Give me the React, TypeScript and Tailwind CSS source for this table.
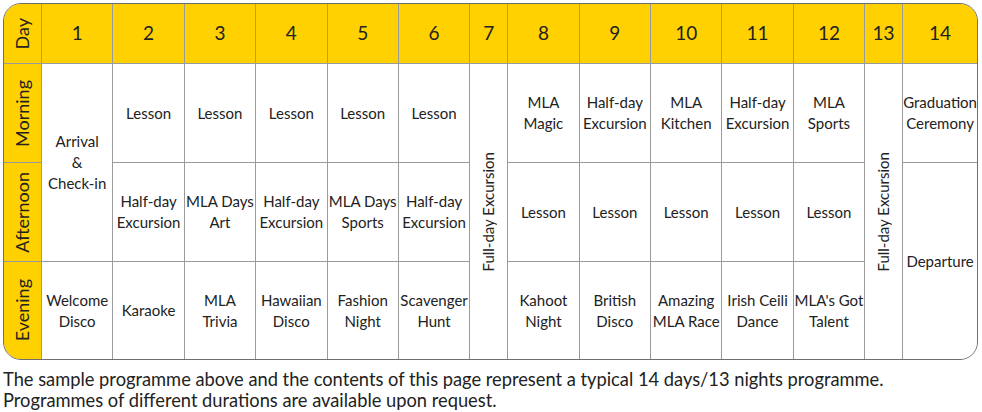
import React from "react";

type Cell = { text: string[]; rows?: number; vertical?: boolean };

const days = ["1", "2", "3", "4", "5", "6", "7", "8", "9", "10", "11", "12", "13", "14"];

// column contents, each column lists its cells top to bottom
const columns: Cell[][] = [
  [{ text: ["Arrival", "&", "Check-in"], rows: 2 }, { text: ["Welcome", "Disco"] }],
  [{ text: ["Lesson"] }, { text: ["Half-day", "Excursion"] }, { text: ["Karaoke"] }],
  [{ text: ["Lesson"] }, { text: ["MLA Days", "Art"] }, { text: ["MLA", "Trivia"] }],
  [{ text: ["Lesson"] }, { text: ["Half-day", "Excursion"] }, { text: ["Hawaiian", "Disco"] }],
  [{ text: ["Lesson"] }, { text: ["MLA Days", "Sports"] }, { text: ["Fashion", "Night"] }],
  [{ text: ["Lesson"] }, { text: ["Half-day", "Excursion"] }, { text: ["Scavenger", "Hunt"] }],
  [{ text: ["Full-day Excursion"], rows: 3, vertical: true }],
  [{ text: ["MLA", "Magic"] }, { text: ["Lesson"] }, { text: ["Kahoot", "Night"] }],
  [{ text: ["Half-day", "Excursion"] }, { text: ["Lesson"] }, { text: ["British", "Disco"] }],
  [{ text: ["MLA", "Kitchen"] }, { text: ["Lesson"] }, { text: ["Amazing", "MLA Race"] }],
  [{ text: ["Half-day", "Excursion"] }, { text: ["Lesson"] }, { text: ["Irish Ceili", "Dance"] }],
  [{ text: ["MLA", "Sports"] }, { text: ["Lesson"] }, { text: ["MLA's Got", "Talent"] }],
  [{ text: ["Full-day Excursion"], rows: 3, vertical: true }],
  [{ text: ["Graduation", "Ceremony"] }, { text: ["Departure"], rows: 2 }],
];

const rowStart = ["row-start-2", "row-start-3", "row-start-4"];
const rowSpan: Record<number, string> = { 1: "row-span-1", 2: "row-span-2", 3: "row-span-3" };
const colStart = [
  "col-start-2", "col-start-3", "col-start-4", "col-start-5", "col-start-6", "col-start-7", "col-start-8",
  "col-start-9", "col-start-10", "col-start-11", "col-start-12", "col-start-13", "col-start-14", "col-start-15",
];

const Vertical = ({ children, className = "" }: { children: React.ReactNode; className?: string }) => (
  <span className={`[writing-mode:vertical-rl] rotate-180 whitespace-nowrap ${className}`}>{children}</span>
);

export default function App() {
  return (
    <div className="w-[982px] h-[412px] bg-white pt-[3px] pl-[3px] font-['Lato',sans-serif] text-[#222]">
      <div className="w-[975px] h-[357px] rounded-[18px] border border-[#6e6e6e] overflow-hidden">
        <div className="grid h-full gap-px bg-[#9a9a9a] grid-cols-[37px_repeat(6,1fr)_37px_repeat(5,1fr)_37px_1fr] grid-rows-[59px_98px_98px_1fr]">
          {/* header row */}
          <div className="bg-[#ffd100] flex items-center justify-center col-start-1 row-start-1">
            <Vertical className="text-[18px]">Day</Vertical>
          </div>
          {days.map((d, i) => (
            <div key={d} className={`bg-[#ffd100] flex items-center justify-center text-[19px] row-start-1 ${colStart[i]}`}>
              {d}
            </div>
          ))}

          {/* row labels */}
          {["Morning", "Afternoon", "Evening"].map((r, i) => (
            <div key={r} className={`bg-[#ffd100] flex items-center justify-center col-start-1 ${rowStart[i]}`}>
              <Vertical className="text-[18px]">{r}</Vertical>
            </div>
          ))}

          {/* programme cells */}
          {columns.map((col, ci) => {
            let r = 0;
            return col.map((cell, k) => {
              const span = cell.rows ?? 1;
              const start = rowStart[r];
              r += span;
              return (
                <div
                  key={`${ci}-${k}`}
                  className={`bg-white flex items-center justify-center text-center text-[15px] leading-[21px] ${colStart[ci]} ${start} ${rowSpan[span]}`}
                >
                  {cell.vertical ? (
                    <Vertical>{cell.text[0]}</Vertical>
                  ) : (
                    <div>
                      {cell.text.map((t) => (
                        <div key={t} className="whitespace-nowrap">{t}</div>
                      ))}
                    </div>
                  )}
                </div>
              );
            });
          })}
        </div>
      </div>
      <p className="mt-[9px] text-[18.3px] leading-[21px] whitespace-nowrap">
        The sample programme above and the contents of this page represent a typical 14 days/13 nights programme.
        <br />
        Programmes of different durations are available upon request.
      </p>
    </div>
  );
}
